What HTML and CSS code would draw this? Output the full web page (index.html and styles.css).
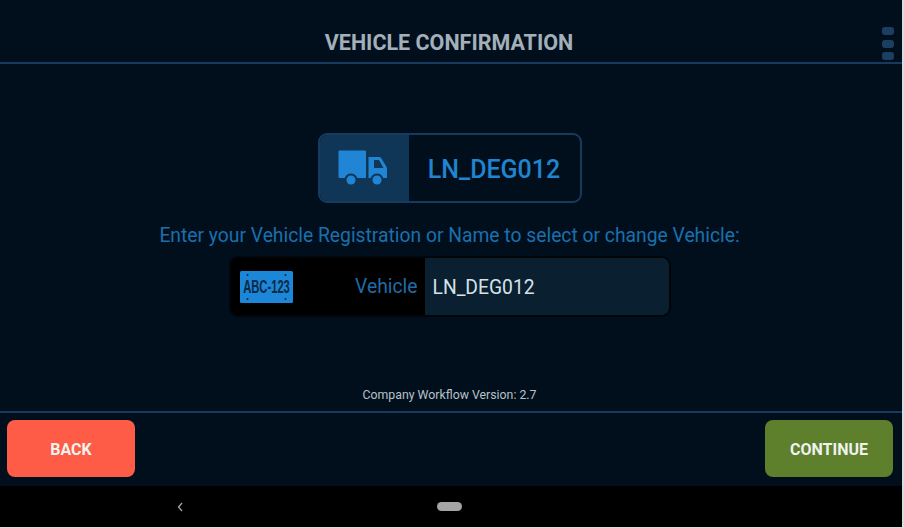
FILE: index.html
```html
<!DOCTYPE html>
<html lang="en">
<head>
    <meta charset="UTF-8">
    <meta name="viewport" content="width=device-width, initial-scale=1.0">
    <title>Vehicle Confirmation</title>
    <link rel="stylesheet" href="styles.css">
</head>
<body>
    <div class="screen">
        <header class="header">
            <h1>VEHICLE CONFIRMATION</h1>
            <div class="menu"><span></span><span></span><span></span></div>
        </header>

        <main class="content">
            <div class="vehicle-badge">
                <div class="badge-icon">
                    <svg width="49" height="36" viewBox="0 0 49 36">
                        <path fill="#2185d5" d="M1.500 .5H27a1 1 0 0 1 1 1V28H19.200A6.500 6.500 0 0 0 6.800 28H1.500a1 1 0 0 1-1-1V1.500a1 1 0 0 1 1-1z"/>
                        <path fill="#2185d5" fill-rule="evenodd" d="M30.500 7H41c1 0 1.800.4 2.300 1.200L48 16c.7 1 1 2 1 3v9h-3.800A6.500 6.500 0 0 0 32.800 28H30.500zM36 10v8h9.500L41 10z"/>
                        <circle fill="#2185d5" cx="13" cy="30" r="4.500"/>
                        <circle fill="#2185d5" cx="39" cy="30" r="4.500"/>
                    </svg>
                </div>
                <div class="badge-name">LN_DEG012</div>
            </div>

            <p class="prompt">Enter your Vehicle Registration or Name to select or change Vehicle:</p>

            <div class="field">
                <div class="field-label">
                    <svg class="plate" width="53" height="32" viewBox="0 0 53 32">
                        <rect width="53" height="32" rx="1.500" fill="#1c86d8"/>
                        <circle cx="7.500" cy="4" r="1" fill="#0a2a45"/>
                        <circle cx="45.500" cy="4" r="1" fill="#0a2a45"/>
                        <circle cx="7.500" cy="28" r="1" fill="#0a2a45"/>
                        <circle cx="45.500" cy="28" r="1" fill="#0a2a45"/>
                        <text class="plate-text" x="0" y="0" text-anchor="middle" transform="translate(26.500 22) scale(.64 1)">ABC-123</text>
                    </svg>
                    <label for="vehicle">Vehicle</label>
                </div>
                <input id="vehicle" class="field-input" type="text" value="LN_DEG012">
            </div>

            <p class="version">Company Workflow Version: 2.7</p>
        </main>

        <footer class="footer">
            <button type="button" class="btn btn-back">BACK</button>
            <button type="button" class="btn btn-continue">CONTINUE</button>
        </footer>

        <nav class="navbar">
            <svg class="nav-back" width="6" height="10" viewBox="0 0 6 10">
                <path d="M5 1 1.500 5 5 9" fill="none" stroke="#a5a5a5" stroke-width="1.300"/>
            </svg>
            <span class="nav-home"></span>
        </nav>
    </div>
</body>
</html>
```

FILE: styles.css
```css
html, body {
    margin: 0;
    padding: 0;
    height: 100%;
    background: #d8dcdf;
    overflow: hidden;
}

body {
    font-family: Roboto, "Liberation Sans", sans-serif;
}

.screen {
    width: 902px;
    height: 527px;
    display: flex;
    flex-direction: column;
    background: #010f1c;
}

.header {
    position: relative;
    height: 62px;
    flex: none;
    box-sizing: content-box;
    border-bottom: 2px solid #173a5e;
    display: flex;
    justify-content: center;
}

.header h1 {
    margin: 31px 4px 0 0;
    font-size: 21.5px;
    line-height: 24px;
    font-weight: 700;
    color: #a3b0ba;
}

.menu {
    position: absolute;
    right: 8px;
    top: 27px;
    display: flex;
    flex-direction: column;
    gap: 4.500px;
}

.menu span {
    display: block;
    width: 12px;
    height: 8px;
    border-radius: 3px;
    background: #1b3f63;
}

.content {
    flex: 1;
    display: flex;
    flex-direction: column;
    align-items: center;
    padding: 69px 3px 0 0;
    box-sizing: border-box;
}

.vehicle-badge {
    width: 264px;
    height: 70px;
    box-sizing: border-box;
    display: flex;
    border: 2px solid #173a5e;
    border-radius: 9px;
    overflow: hidden;
}

.badge-icon {
    width: 89px;
    padding-right: 4px;
    box-sizing: border-box;
    background: #0f3557;
    display: flex;
    align-items: center;
    justify-content: center;
}

.badge-name {
    flex: 1;
    display: flex;
    align-items: center;
    justify-content: center;
    padding-top: 2px;
    font-size: 25px;
    font-weight: 500;
    color: #1f85d0;
}

.prompt {
    margin: 22px 0 0;
    font-size: 19.3px;
    line-height: 22px;
    color: #1a6fae;
}

.field {
    width: 442px;
    height: 61px;
    margin-top: 9px;
    box-sizing: border-box;
    display: flex;
    background: #000;
    border: 2px solid #01060b;
    border-radius: 9px;
    overflow: hidden;
}

.field-label {
    width: 194px;
    display: flex;
    align-items: center;
    justify-content: space-between;
    padding: 0 7px 0 9px;
    box-sizing: border-box;
    font-size: 19.3px;
    color: #1f6ca8;
}

.plate-text {
    font-family: "Liberation Sans", sans-serif;
    font-size: 17.500px;
    font-weight: 700;
    fill: #0a2a45;
}

.field-input {
    flex: 1;
    min-width: 0;
    padding: 1px 8px 0;
    border: none;
    outline: none;
    background: #0a1f30;
    color: #d7e2e8;
    font-family: Roboto, "Liberation Sans", sans-serif;
    font-size: 19.3px;
}

.version {
    margin: auto 0 8px;
    font-size: 12.3px;
    line-height: 16px;
    color: #b7c2c9;
}

.footer {
    height: 57px;
    flex: none;
    box-sizing: content-box;
    border-top: 2px solid #173a5e;
    display: flex;
    justify-content: space-between;
    padding: 7px 9px 9px 7px;
}

.btn {
    width: 128px;
    height: 57px;
    padding: 2px 0 0;
    border: none;
    border-radius: 8px;
    font-family: Roboto, "Liberation Sans", sans-serif;
    font-size: 16px;
    font-weight: 700;
    color: #eef3ee;
    cursor: pointer;
}

.btn-back {
    background: #ff5c47;
}

.btn-continue {
    background: #5e7f2c;
}

.navbar {
    position: relative;
    height: 41px;
    flex: none;
    background: #000;
    display: flex;
    align-items: center;
    justify-content: center;
}

.nav-back {
    position: absolute;
    left: 177px;
    top: 16px;
}

.nav-home {
    width: 25px;
    height: 9px;
    border-radius: 5px;
    background: #a5a5a5;
    margin-left: -3px;
}
```
